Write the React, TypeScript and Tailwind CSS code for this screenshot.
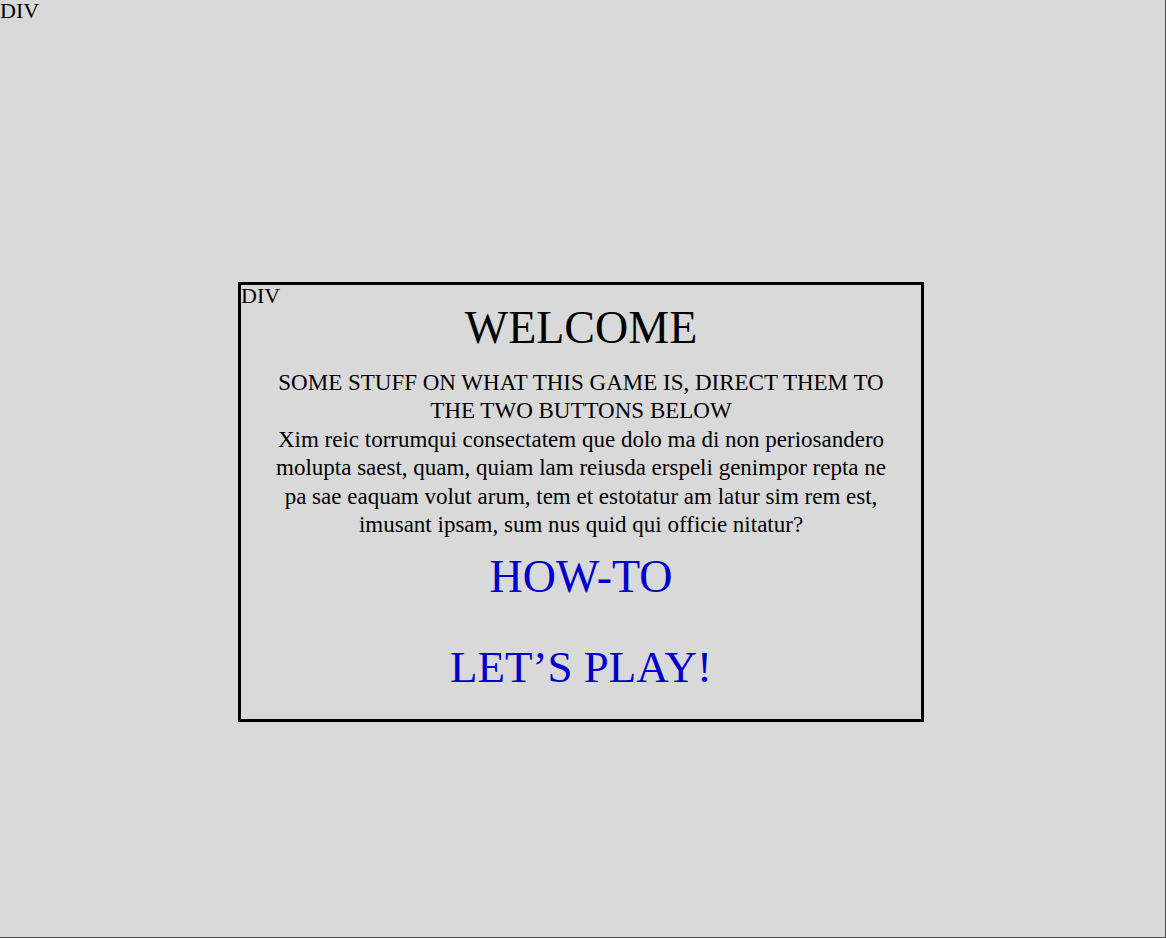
import React from 'react';

const serif = { fontFamily: '"Liberation Serif", "DejaVu Serif", serif' };

const App: React.FC = () => {
  return (
    <div
      className="relative h-[938px] w-[1166px] border-r border-b border-[#4a4a4a] bg-[#d9d9d9] text-black"
      style={serif}
    >
      <span className="absolute left-0 top-0 text-[22px] leading-[22px]">DIV</span>

      <div className="ml-[238px] pt-[282px]">
        <div className="relative flex w-[686px] flex-col items-center border-[3px] border-black pb-[25px] pt-4 text-center">
          <span className="absolute left-0 top-0 text-[22px] leading-[21px]">DIV</span>

          <h1 className="text-[46px] leading-[53px]">WELCOME</h1>

          <div className="mt-[15px] w-[630px] text-[23px] leading-[28.4px]">
            <p>SOME STUFF ON WHAT THIS GAME IS, DIRECT THEM TO THE TWO BUTTONS BELOW</p>
            <p>
              Xim reic torrumqui consectatem que dolo ma di non periosandero molupta saest, quam, quiam lam
              reiusda erspeli genimpor repta ne pa sae eaquam volut arum, tem et estotatur am latur sim rem est,
              imusant ipsam, sum nus quid qui officie nitatur?
            </p>
          </div>

          <a className="mt-[11px] text-[46px] leading-[53px] text-[#0000cc]">HOW-TO</a>
          <a className="mt-[38px] text-[45px] leading-[53px] text-[#0000cc]">LET’S PLAY!</a>
        </div>
      </div>
    </div>
  );
};

export default App;
